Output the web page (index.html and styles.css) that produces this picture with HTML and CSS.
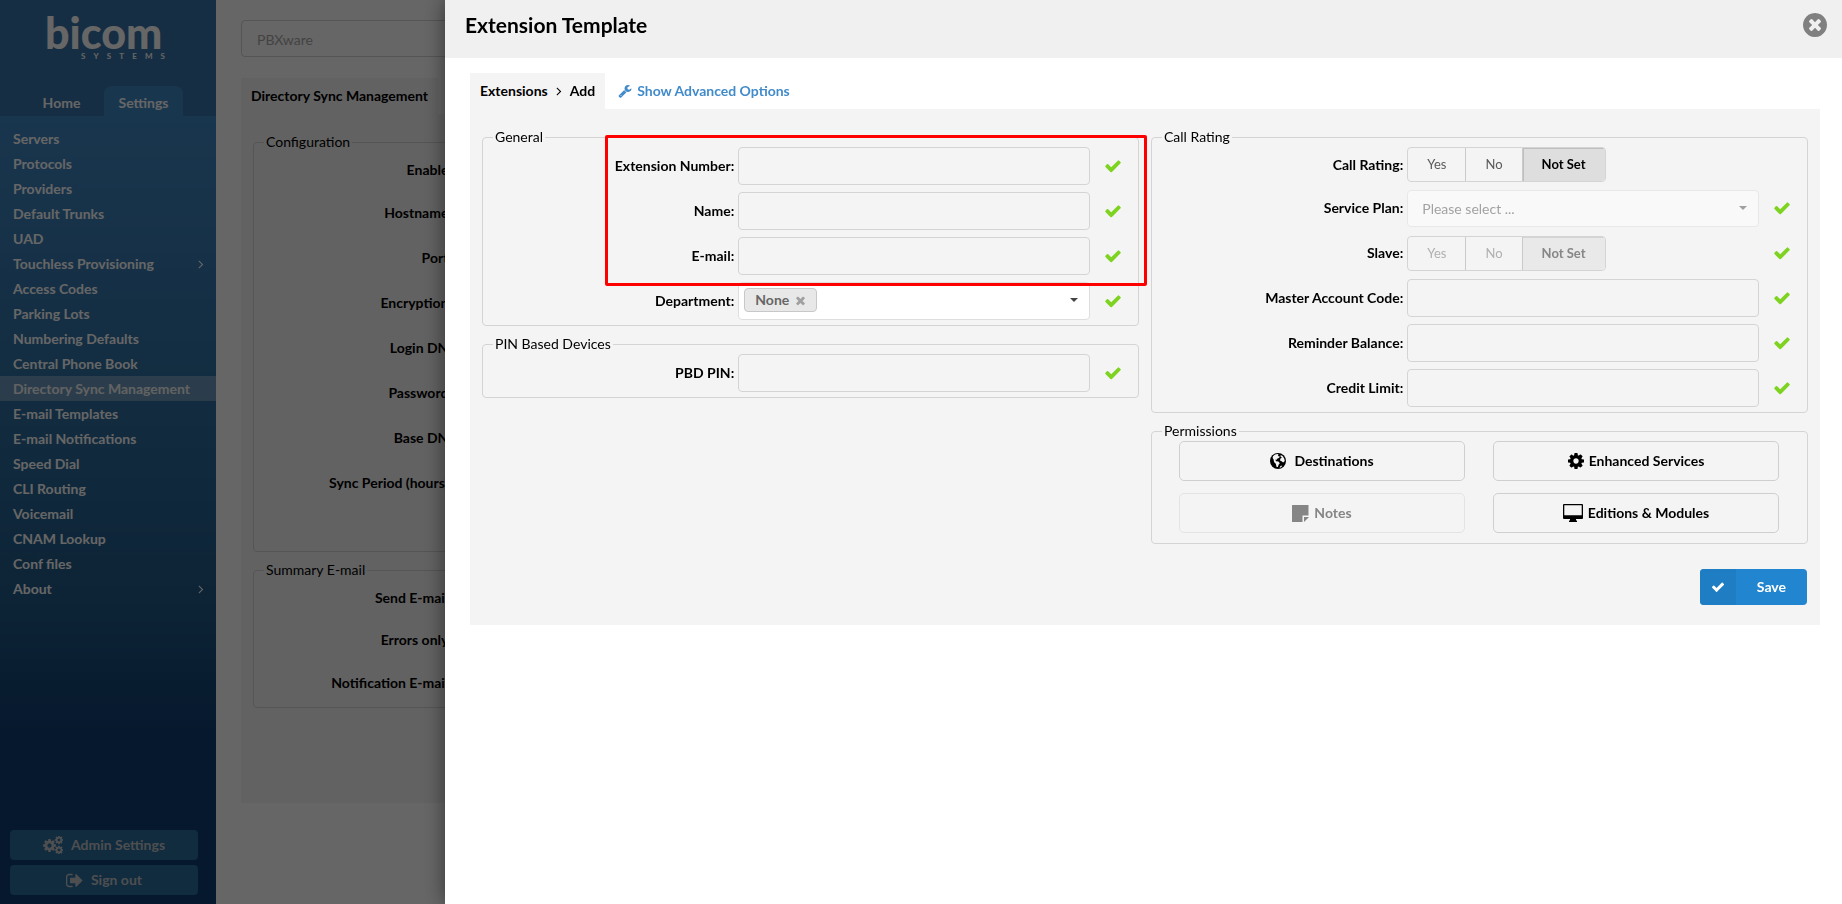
FILE: index.html
```html
<!DOCTYPE html>
<html lang="en">
<head>
<meta charset="utf-8">
<title>Extension Template</title>
<link rel="stylesheet" href="styles.css">
</head>
<body>
<svg class="sprite" aria-hidden="true">
  <symbol id="check" viewBox="0 0 1792 1792"><path d="M1671 566q0 40-28 68l-724 724-136 136q-28 28-68 28t-68-28l-136-136-362-362q-28-28-28-68t28-68l136-136q28-28 68-28t68 28l294 295 656-657q28-28 68-28t68 28l136 136q28 28 28 68z"/></symbol>
  <symbol id="cog" viewBox="0 0 1792 1792"><path d="M1152 896q0-106-75-181t-181-75-181 75-75 181 75 181 181 75 181-75 75-181zm512-109v222q0 12-8 23t-20 13l-185 28q-19 54-39 91 35 50 107 138 10 12 10 25t-9 23q-27 37-99 108t-94 71q-12 0-26-9l-138-108q-44 23-91 38-16 136-29 186-7 28-36 28h-222q-14 0-24.5-8.5t-11.5-21.5l-28-184q-49-16-90-37l-141 107q-10 9-25 9-14 0-25-11-126-114-165-168-7-10-7-23 0-12 8-23 15-21 51-66.500t54-70.500q-27-50-41-99l-183-27q-13-2-21-12.500t-8-23.500v-222q0-12 8-23t19-13l186-28q14-46 39-92-40-57-107-138-10-12-10-24 0-10 9-23 26-36 98.500-107.500t94.500-71.500q13 0 26 10l138 107q44-23 91-38 16-136 29-186 7-28 36-28h222q14 0 24.500 8.500t11.500 21.500l28 184q49 16 90 37l142-107q9-9 24-9 13 0 25 10 129 119 165 170 7 8 7 22 0 12-8 23-15 21-51 66.500t-54 70.500q26 50 41 98l183 28q13 2 21 12.500t8 23.500z"/></symbol>
  <symbol id="close" viewBox="0 0 1792 1792"><path d="M1490 1322q0 40-28 68l-136 136q-28 28-68 28t-68-28l-294-294-294 294q-28 28-68 28t-68-28l-136-136q-28-28-28-68t28-68l294-294-294-294q-28-28-28-68t28-68l136-136q28-28 68-28t68 28l294 294 294-294q28-28 68-28t68 28l136 136q28 28 28 68t-28 68l-294 294 294 294q28 28 28 68z"/></symbol>
  <symbol id="angle" viewBox="0 0 1792 1792"><path d="M1171 960q0 13-10 23l-466 466q-10 10-23 10t-23-10l-50-50q-10-10-10-23t10-23l393-393-393-393q-10-10-10-23t10-23l50-50q10-10 23-10t23 10l466 466q10 10 10 23z"/></symbol>
</svg>

<div class="page">
  <aside class="sidebar">
    <header class="side-head">
      <div class="logo">
        <div class="logo-name">bicom</div>
        <div class="logo-sub"><span>S</span><span>Y</span><span>S</span><span>T</span><span>E</span><span>M</span><span>S</span></div>
      </div>
      <nav class="tabs">
        <a class="tab" href="#">Home</a>
        <a class="tab tab-on" href="#">Settings</a>
      </nav>
    </header>
    <nav class="menu">
      <a href="#">Servers</a>
      <a href="#">Protocols</a>
      <a href="#">Providers</a>
      <a href="#">Default Trunks</a>
      <a href="#">UAD</a>
      <a href="#">Touchless Provisioning<svg class="icon"><use href="#angle"/></svg></a>
      <a href="#">Access Codes</a>
      <a href="#">Parking Lots</a>
      <a href="#">Numbering Defaults</a>
      <a href="#">Central Phone Book</a>
      <a href="#" class="current">Directory Sync Management</a>
      <a href="#">E-mail Templates</a>
      <a href="#">E-mail Notifications</a>
      <a href="#">Speed Dial</a>
      <a href="#">CLI Routing</a>
      <a href="#">Voicemail</a>
      <a href="#">CNAM Lookup</a>
      <a href="#">Conf files</a>
      <a href="#">About<svg class="icon"><use href="#angle"/></svg></a>
    </nav>
    <div class="side-foot">
      <button type="button"><svg class="gears" viewBox="0 0 20 18"><use href="#cog" x="-1" y="2" width="15" height="15"/><use href="#cog" x="11" y="-1" width="10" height="10"/><use href="#cog" x="11" y="9" width="10" height="10"/></svg>Admin Settings</button>
      <button type="button"><svg class="exit" viewBox="64 192 1632 1408"><path d="M704 1440q0 4 1 20t.5 26.500-3 23.500-10 19.500-20.500 6.500h-320q-119 0-203.500-84.500t-84.500-203.500v-704q0-119 84.500-203.500t203.500-84.500h320q13 0 22.500 9.500t9.500 22.500q0 4 1 20t.5 26.500-3 23.500-10 19.500-20.500 6.500h-320q-66 0-113 47t-47 113v704q0 66 47 113t113 47h312l11.500 1 11.500 3 8 5.500 7 9 2 13.500zm928-544q0 26-19 45l-544 544q-19 19-45 19t-45-19-19-45v-288h-448q-26 0-45-19t-19-45v-384q0-26 19-45t45-19h448v-288q0-26 19-45t45-19 45 19l544 544q19 19 19 45z"/></svg>Sign out</button>
    </div>
  </aside>

  <main class="main">
    <input class="search" type="text" placeholder="PBXware" aria-label="Server">
    <h2 class="main-title">Directory Sync Management</h2>
    <div class="main-panel">
      <fieldset>
        <legend>Configuration</legend>
        <div class="rows config">
          <div class="brow short"><label for="b1">Enable:</label><input id="b1"></div>
          <div class="brow"><label for="b2">Hostname:</label><input id="b2"></div>
          <div class="brow"><label for="b3">Port:</label><input id="b3"></div>
          <div class="brow"><label for="b4">Encryption:</label><input id="b4"></div>
          <div class="brow"><label for="b5">Login DN:</label><input id="b5"></div>
          <div class="brow"><label for="b6">Password:</label><input id="b6"></div>
          <div class="brow"><label for="b7">Base DN:</label><input id="b7"></div>
          <div class="brow"><label for="b8">Sync Period (hours):</label><input id="b8"></div>
        </div>
      </fieldset>
      <fieldset>
        <legend>Summary E-mail</legend>
        <div class="rows">
          <div class="brow short"><label for="b9">Send E-mail:</label><input id="b9"></div>
          <div class="brow short"><label for="b10">Errors only:</label><input id="b10"></div>
          <div class="brow"><label for="b11">Notification E-mail:</label><input id="b11"></div>
        </div>
      </fieldset>
    </div>
  </main>
</div>

<div class="dimmer"></div>

<section class="drawer" role="dialog" aria-labelledby="drawer-title">
  <header class="drawer-head">
    <h1 id="drawer-title">Extension Template</h1>
    <button class="close" type="button" aria-label="Close"><svg viewBox="128 128 1536 1536"><path d="M1277 1122q0-26-19-45l-181-181 181-181q19-19 19-45 0-27-19-46l-90-90q-19-19-46-19-26 0-45 19l-181 181-181-181q-19-19-45-19-27 0-46 19l-90 90q-19 19-19 46 0 26 19 45l181 181-181 181q-19 19-19 45 0 27 19 46l90 90q19 19 46 19 26 0 45-19l181-181 181 181q19 19 45 19 27 0 46-19l90-90q19-19 19-46zm387-226q0 209-103 385.500t-279.500 279.500-385.500 103-385.500-103-279.500-279.500-103-385.500 103-385.500 279.500-279.500 385.500-103 385.500 103 279.500 279.500 103 385.500z"/></svg></button>
  </header>

  <div class="drawer-body">
    <div class="crumbs">
      <div class="crumb-tab"><span>Extensions</span><svg class="icon"><use href="#angle"/></svg><span>Add</span></div>
      <a class="advanced" href="#"><svg class="icon" viewBox="0 0 1792 1792"><path d="M448 1472q0-26-19-45t-45-19-45 19-19 45 19 45 45 19 45-19 19-45zm644-420l-682 682q-37 37-90 37-52 0-91-37l-106-108q-38-36-38-90 0-53 38-91l681-681q39 98 114.500 173.500t173.500 114.500zm634-435q0 39-23 106-47 134-164.500 217.500t-258.500 83.500q-185 0-316.500-131.500t-131.500-316.500 131.500-316.500 316.500-131.500q58 0 121.500 16.500t107.500 46.500q16 11 16 28t-16 28l-293 169v224l193 107q5-3 79-48.500t135.500-81 70.500-35.500q15 0 23.500 10t8.500 25z"/></svg>Show Advanced Options</a>
    </div>

    <form class="panel">
      <div class="columns">
        <div class="column">
          <fieldset>
            <legend>General</legend>
            <div class="rows">
              <div class="marker"></div>
              <div class="row"><label for="ext">Extension Number:</label><input id="ext" type="text"><svg class="check"><use href="#check"/></svg></div>
              <div class="row"><label for="name">Name:</label><input id="name" type="text"><svg class="check"><use href="#check"/></svg></div>
              <div class="row"><label for="mail">E-mail:</label><input id="mail" type="text"><svg class="check"><use href="#check"/></svg></div>
              <div class="row"><label for="dept">Department:</label>
                <div class="drop">
                  <select id="dept" class="multi"><option></option></select>
                  <span class="tag">None<button type="button" aria-label="Remove"><svg><use href="#close"/></svg></button></span>
                </div>
                <svg class="check"><use href="#check"/></svg></div>
            </div>
          </fieldset>
          <fieldset>
            <legend>PIN Based Devices</legend>
            <div class="rows">
              <div class="row"><label for="pin">PBD PIN:</label><input id="pin" type="text"><svg class="check"><use href="#check"/></svg></div>
            </div>
          </fieldset>
        </div>

        <div class="column">
          <fieldset>
            <legend>Call Rating</legend>
            <div class="rows">
              <div class="row slim"><span class="label" id="cr">Call Rating:</span>
                <div class="segments" role="radiogroup" aria-labelledby="cr">
                  <label><input type="radio" name="cr">Yes</label>
                  <label><input type="radio" name="cr">No</label>
                  <label><input type="radio" name="cr" checked>Not Set</label>
                </div></div>
              <div class="row"><label for="plan">Service Plan:</label>
                <div class="drop off"><select id="plan" disabled><option>Please select ...</option></select></div>
                <svg class="check"><use href="#check"/></svg></div>
              <div class="row"><span class="label" id="sl">Slave:</span>
                <div class="segments off" role="radiogroup" aria-labelledby="sl">
                  <label><input type="radio" name="sl" disabled>Yes</label>
                  <label><input type="radio" name="sl" disabled>No</label>
                  <label><input type="radio" name="sl" disabled checked>Not Set</label>
                </div>
                <svg class="check"><use href="#check"/></svg></div>
              <div class="row"><label for="mac">Master Account Code:</label><input id="mac" type="text"><svg class="check"><use href="#check"/></svg></div>
              <div class="row"><label for="rem">Reminder Balance:</label><input id="rem" type="text"><svg class="check"><use href="#check"/></svg></div>
              <div class="row"><label for="lim">Credit Limit:</label><input id="lim" type="text"><svg class="check"><use href="#check"/></svg></div>
            </div>
          </fieldset>
          <fieldset>
            <legend>Permissions</legend>
            <div class="perms">
              <button class="globe" type="button"><svg width="16" height="16" viewBox="0 0 16 16"><circle cx="8" cy="8" r="8"/><path fill="#f4f4f4" d="M3 3.200 5 1.600 7.600 1l1 .8-.8 1.200L9.800 3.400 9 5 7.400 5.400 6.800 6.800 5.400 6.600 6 8.200l2.400.4 1.400 1.600-1.200 1.600-.8 2.200L6.600 14l-.8-3.200-1.600-1.600L3.400 6 2.600 5zM10.600 2l2 1 1.600 2.600.6 2.400-1.600 1.400-1.600-1.200L10 7.400l.4-2 1.600-.6-1.400-1zM10.400 13l2-.6-1.200 1.800-1.600.6z"/></svg>Destinations</button>
              <button type="button"><svg width="16" height="16" viewBox="128 128 1536 1536"><use href="#cog" width="1792" height="1792"/></svg>Enhanced Services</button>
              <button type="button" disabled><svg width="17" height="17" viewBox="0 0 17 17"><path d="M.5 0h16v10.500h-6V17H.5a.5.500 0 0 1-.5-.5V.5A.5.500 0 0 1 .5 0zM12 12h5l-5 5z"/></svg>Notes</button>
              <button type="button"><svg width="20" height="18" viewBox="0 0 20 18"><path fill-rule="evenodd" d="M1 0h18a1 1 0 0 1 1 1v13a1 1 0 0 1-1 1h-6v1.500h1V18H6v-1.500h1V15H1a1 1 0 0 1-1-1V1a1 1 0 0 1 1-1zm.3 1.300v10h17.400v-10z"/></svg>Editions &amp; Modules</button>
            </div>
          </fieldset>
        </div>
      </div>
      <button class="save" type="submit"><span class="save-icon"><svg><use href="#check"/></svg></span><span class="save-text">Save</span></button>
    </form>
  </div>
</section>
</body>
</html>
```

FILE: styles.css
```css
* { box-sizing: border-box; }
body {
  margin: 0;
  font: 14px/20px Lato, "Liberation Sans", sans-serif;
  color: #000;
  background: #fff;
  overflow: hidden;
}
a { color: inherit; text-decoration: none; }
button, input, select { font: inherit; color: inherit; }
button { cursor: pointer; padding: 0; border: 0; background: none; }
svg { fill: currentColor; display: block; flex: none; }
.sprite { position: absolute; width: 0; height: 0; }
.icon { width: 14px; height: 14px; }

.page { display: flex; min-height: 100vh; }

/* Sidebar */
.sidebar {
  flex: 0 0 216px;
  display: flex;
  flex-direction: column;
  color: #fff;
  font-weight: bold;
  background: linear-gradient(#3e87c3 116px, #3b80b9 200px, #215a87 600px, #0f3c70 740px);
}
.side-head {
  height: 116px;
  display: flex;
  flex-direction: column;
  justify-content: space-between;
  background: #3773a8;
}
.logo { width: 120px; margin: 14px 0 0 45px; }
.logo-name { font-size: 43px; font-weight: 900; line-height: 38px; }
.logo-sub {
  display: flex;
  justify-content: space-between;
  margin-left: 36px;
  font-size: 8px;
  line-height: 8px;
}
.tabs { display: flex; gap: 3px; padding-left: 22px; }
.tab {
  flex: 0 0 79px;
  height: 30px;
  line-height: 34px;
  text-align: center;
  border-radius: 8px 8px 0 0;
}
.tab-on { background: #3e87c3; }
.menu { padding: 10px 0; flex: 1; }
.menu a {
  display: flex;
  align-items: center;
  justify-content: space-between;
  height: 25px;
  padding: 0 8px 0 13px;
}
.menu .current { background: rgba(255, 255, 255, .3); color: #f4f4f4; }
.side-foot {
  display: flex;
  flex-direction: column;
  gap: 5px;
  padding: 0 18px 9px 10px;
}
.side-foot button {
  height: 30px;
  display: flex;
  align-items: center;
  justify-content: center;
  gap: 8px;
  border-radius: 4px;
  background: #2b6d9d;
  color: #c0c4c8;
  font-weight: bold;
}
.gears { width: 20px; height: 18px; }
.exit { width: 17px; height: 15px; }

/* Page behind the drawer */
.main { flex: 1; padding: 20px 24px 0 25px; min-width: 0; }
.search {
  display: block;
  width: 100%;
  height: 37px;
  padding: 2px 15px 0;
  border: 1px solid #e4e4e4;
  border-radius: 4px;
  background: #fff;
}
.search::placeholder { color: #a8a8a8; }
.main-title {
  width: max-content;
  margin: 21px 0 0;
  padding: 8px 10px;
  font-size: 14px;
  line-height: 20px;
  background: #f4f4f4;
}
.main-panel {
  display: flex;
  flex-direction: column;
  gap: 8px;
  padding: 18px 12px 95px;
  background: #f4f4f4;
}
.config { padding-bottom: 44px; }
.brow {
  display: grid;
  grid-template-columns: 198px 1fr;
  gap: 4px;
  align-items: center;
  height: 38px;
}
.brow.short { height: 35px; }
.brow label { text-align: right; font-weight: bold; }
.brow input { height: 35px; }

.dimmer { position: fixed; inset: 0; background: rgba(0, 0, 0, .6); }

/* Shared form parts */
fieldset {
  min-width: 0;
  margin: 0;
  padding: 0 0 5px;
  border: 1px solid #d4d4d5;
  border-radius: 4px;
}
legend { margin-left: 10px; padding: 0 2px; }
.rows { display: flex; flex-direction: column; gap: 7px; position: relative; }
input[type="text"] {
  border: 1px solid #d4d4d5;
  border-radius: 4px;
}

/* Drawer */
.drawer {
  position: fixed;
  inset: 0 0 0 445px;
  background: #fff;
  box-shadow: 0 0 20px rgba(0, 0, 0, .5);
}
.drawer-head {
  display: flex;
  align-items: center;
  justify-content: space-between;
  height: 58px;
  padding: 0 15px 8px 20px;
  background: #f0f0f0;
}
.drawer-head h1 { margin: 0; font-size: 21px; line-height: 28px; }
.close { color: #808080; }
.close svg { width: 24px; height: 24px; }
.drawer-body { padding: 15px 22px 0 25px; }
.crumbs { display: flex; height: 36px; font-weight: bold; }
.crumb-tab {
  display: flex;
  align-items: center;
  gap: 4px;
  padding: 0 10px;
  background: #f4f4f4;
}
.advanced {
  display: flex;
  align-items: center;
  gap: 5px;
  margin-left: 13px;
  color: #428bca;
}
.panel { padding: 18px 12px 20px; background: #f4f4f4; }
.columns { display: grid; grid-template-columns: 1fr 1fr; gap: 12px; align-items: start; }
.column { display: flex; flex-direction: column; gap: 8px; min-width: 0; }
.row {
  display: grid;
  grid-template-columns: 39% 1fr 46px;
  align-items: center;
  height: 38px;
  padding: 0 2px 0 1px;
}
.row.slim { height: 35px; }
.row > label, .label { padding-right: 4px; text-align: right; font-weight: bold; }
.row > input { width: 100%; height: 38px; padding: 0 12px; background: #f4f4f4; }
.check { width: 18px; height: 18px; justify-self: center; color: #7ed321; }

.marker {
  position: absolute;
  top: -12px;
  left: 122px;
  right: -9px;
  height: 151px;
  border: 3px solid #f00;
  border-radius: 2px;
  z-index: 1;
  pointer-events: none;
}

.drop { position: relative; height: 38px; }
.drop::after {
  content: "";
  position: absolute;
  top: 16px;
  right: 12px;
  border: 4px solid transparent;
  border-top-color: #444;
  border-bottom: 0;
  pointer-events: none;
}
.drop select {
  appearance: none;
  width: 100%;
  height: 38px;
  padding: 2px 14px 0;
  border: 1px solid #dededf;
  border-radius: 4px;
  background: #fff;
}
.drop.off { height: 37px; }
.drop.off::after { border-top-color: #a0a0a0; }
.drop.off select {
  height: 37px;
  border-color: #e8e8e9;
  background: #f9f9f9;
  color: #a2a2a2;
  opacity: 1;
}
.tag {
  position: absolute;
  top: 6px;
  left: 6px;
  display: flex;
  align-items: center;
  gap: 5px;
  height: 24px;
  padding: 0 9px 0 10px;
  border: 1px solid #c8c8c8;
  border-radius: 4px;
  background: #e8e8e8;
  color: #666;
  font-weight: bold;
}
.tag svg { width: 13px; height: 13px; color: #a0a0a0; }

.segments {
  display: flex;
  justify-self: start;
  height: 35px;
  border: 1px solid #d4d4d5;
  border-radius: 4px;
  overflow: hidden;
}
.segments label {
  padding: 0 19px;
  font-size: 13px;
  line-height: 33px;
  color: #5a5a5a;
  border-right: 1px solid #cacaca;
}
.segments label:last-child {
  border-right: 0;
  background: #dedede;
  color: #000;
  font-weight: bold;
  box-shadow: inset 1px 1px 0 #bebebe;
}
.segments.off label { color: #b0b0b0; }
.segments.off label:last-child { background: #e9e9e9; color: #868686; box-shadow: inset 0 1px 0 #d4d4d4; }
.segments input { position: absolute; opacity: 0; pointer-events: none; }

.perms {
  display: grid;
  grid-template-columns: 1fr 1fr;
  gap: 12px 28px;
  padding: 0 28px 5px 27px;
}
.perms button {
  display: flex;
  align-items: center;
  justify-content: center;
  gap: 5px;
  height: 40px;
  border: 1px solid #cfcfcf;
  border-radius: 5px;
  font-weight: bold;
}
.perms .globe { gap: 8px; }
.perms button:disabled { border-color: #e3e3e3; color: #858585; }

.save {
  display: flex;
  margin: 25px 1px 0 auto;
  height: 36px;
  line-height: 36px;
  border-radius: 4px;
  overflow: hidden;
  background: #2185d0;
  color: #fff;
  font-weight: bold;
}
.save-icon {
  display: flex;
  align-items: center;
  justify-content: center;
  width: 36px;
  height: 36px;
  background: #1f7dc4;
}
.save-icon svg { width: 14px; height: 14px; }
.save-text { padding: 0 21px; }
```
